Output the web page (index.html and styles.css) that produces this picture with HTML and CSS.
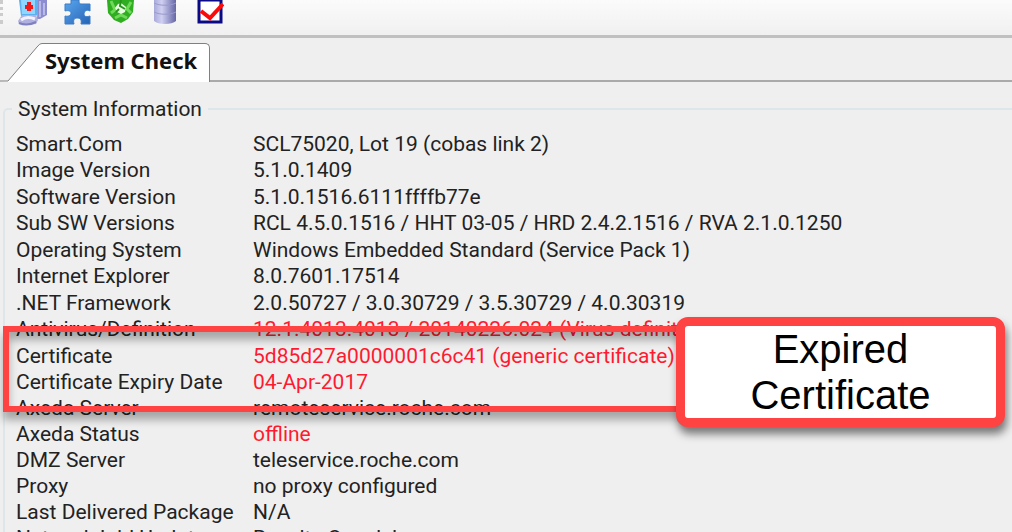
FILE: index.html
```html
<!DOCTYPE html>
<html lang="en">
  <head>
    <meta charset="utf-8">
    <title>System Check</title>
    <link rel="stylesheet" href="styles.css">
  </head>
  <body>
    <div class="toolbar">
      <span class="grip"></span>
      <button class="tool" aria-label="Computer">
        <svg viewBox="0 0 30 26" width="30" height="26">
          <path d="M20 0h9v15l-7 4h-3z" fill="#8c8cd0"/>
          <path d="M22 1v16M26 3v12" stroke="#b9b9e8" stroke-width="2"/>
          <path d="M1 0h19v14l-2 2H3z" fill="#5eb0ee"/>
          <path d="M3 0h14v14H4z" fill="#8fd6ff"/>
          <path d="M4 15h14l2 5-2 4-8 1-9-1-1-3z" fill="#b0b0e0"/>
          <path d="M3 20c4-3 9-3 14-1" stroke="#f0f0ff" stroke-width="3" fill="none"/>
          <path d="M1 23c5 2 11 2 17-1" stroke="#8080be" stroke-width="2" fill="none"/>
          <path d="M11 2v9M7 7h8" stroke="#f21818" stroke-width="4"/>
        </svg>
      </button>
      <button class="tool" aria-label="Plugins">
        <svg viewBox="0 0 30 26" width="30" height="26">
          <defs>
            <linearGradient id="blue" x1="0" y1="0" x2="1" y2="1">
              <stop offset="0" stop-color="#5ba7ef"/>
              <stop offset="1" stop-color="#2563b5"/>
            </linearGradient>
          </defs>
          <path d="M9 0h8c0 3 0 4 2 4h9v7c-3-2-6 0-6 3s3 3 6 2v8h-9c1-5-1-6-4-6s-4 2-3 6H3v-8c4 1 6-1 6-3s-3-3-6-2V4h6z" fill="url(#blue)" stroke="#3a7cc8"/>
        </svg>
      </button>
      <button class="tool" aria-label="Refresh">
        <svg viewBox="0 0 30 26" width="30" height="26">
          <path d="M1 0h27l-1 12-5 7-7 4-7-3-6-7z" fill="#2fae22"/>
          <path d="M5 1l4 9-4 3M25 2l-4 7 4 4M9 18l6-3 6 3" stroke="#6fd958" stroke-width="3" fill="none"/>
          <path d="M15 3l5 4-1 5-4 2-4-2-2-4 3-4z" fill="#e8ffe0"/>
          <path d="M15 0l-1 6 5 3M10 12l3-3" stroke="#27951d" stroke-width="2" fill="none"/>
        </svg>
      </button>
      <button class="tool" aria-label="Database">
        <svg viewBox="0 0 30 26" width="30" height="26">
          <defs>
            <linearGradient id="drum">
              <stop offset="0" stop-color="#a9a9da"/>
              <stop offset="0.350" stop-color="#d0d0f2"/>
              <stop offset="1" stop-color="#6666a6"/>
            </linearGradient>
          </defs>
          <path d="M4 0h22v21c-4 4-18 4-22 0z" fill="url(#drum)"/>
          <path d="M4 3c6 3 16 3 22 0M4 12c6 3 16 3 22 0" stroke="#9a9acc" fill="none"/>
        </svg>
      </button>
      <button class="tool" aria-label="Check">
        <svg viewBox="0 0 30 26" width="30" height="26">
          <path d="M5 0h22v22H5z" fill="#fff" stroke="#0a0a86" stroke-width="3"/>
          <path d="M7 11l9 7L29 4" fill="none" stroke="#fb0a0a" stroke-width="4"/>
        </svg>
      </button>
    </div>

    <div class="tabs">
      <svg class="slope" viewBox="0 0 42 39" width="42" height="39">
        <path d="M0 39L8 38 37 4q3-4 5-3.500V39z" fill="#fff"/>
        <path d="M0 38H8L37 4q3-4 5-3.500" fill="none" stroke="#808080"/>
      </svg>
      <a class="tab" href="#info">System Check</a>
      <span class="tab-line"></span>
    </div>

    <div class="page">
      <fieldset class="info" id="info">
        <legend>System Information</legend>
        <table>
          <tr><th>Smart.Com</th><td>SCL75020, Lot 19 (cobas link 2)</td></tr>
          <tr><th>Image Version</th><td>5.1.0.1409</td></tr>
          <tr><th>Software Version</th><td>5.1.0.1516.6111ffffb77e</td></tr>
          <tr><th>Sub SW Versions</th><td>RCL 4.5.0.1516 / HHT 03-05 / HRD 2.4.2.1516 / RVA 2.1.0.1250</td></tr>
          <tr><th>Operating System</th><td>Windows Embedded Standard (Service Pack 1)</td></tr>
          <tr><th>Internet Explorer</th><td>8.0.7601.17514</td></tr>
          <tr><th>.NET Framework</th><td>2.0.50727 / 3.0.30729 / 3.5.30729 / 4.0.30319</td></tr>
          <tr><th>Antivirus/Definition</th><td class="bad">12.1.4013.4013 / 20140226.024 (Virus definition)</td></tr>
          <tr><th>Certificate</th><td class="bad">5d85d27a0000001c6c41 (generic certificate)</td></tr>
          <tr><th>Certificate Expiry Date</th><td class="bad">04-Apr-2017</td></tr>
          <tr><th>Axeda Server</th><td>remoteservice.roche.com</td></tr>
          <tr><th>Axeda Status</th><td class="bad">offline</td></tr>
          <tr><th>DMZ Server</th><td>teleservice.roche.com</td></tr>
          <tr><th>Proxy</th><td>no proxy configured</td></tr>
          <tr><th>Last Delivered Package</th><td>N/A</td></tr>
          <tr><th>Network Inid Update</th><td>Results Cen del</td></tr>
        </table>
      </fieldset>
      <div class="marker"></div>
      <div class="callout">Expired<br>Certificate</div>
    </div>
  </body>
</html>
```
FILE: styles.css
```css
body {
  margin: 0;
  height: 100vh;
  overflow: hidden;
  background: #efefef;
  color: #222;
  font-family: Roboto, "Liberation Sans", Arial, sans-serif;
  font-size: 21px;
}

.toolbar {
  display: flex;
  gap: 14px;
  height: 35px;
  background: linear-gradient(#fbfbfb, #f0f0f0);
  border-bottom: 3px solid #c0c0c0;
}
.grip {
  width: 1px;
  height: 24px;
  border-left: 3px dotted #ccc;
}
.tool {
  width: 30px;
  height: 26px;
  padding: 0;
  border: 0;
  background: none;
}
.tool svg {
  display: block;
}

.tabs {
  display: flex;
  margin-top: 5px;
}
.slope {
  display: block;
}
.tab {
  box-sizing: border-box;
  height: 39px;
  padding: 0 12px 0 3px;
  background: #fff;
  border: 1px solid #808080;
  border-width: 1px 1px 0 0;
  border-top-right-radius: 5px;
  color: #111;
  font: bold 22px/33px "Noto Sans", sans-serif;
  text-decoration: none;
}
.tab-line {
  flex: 1;
  margin-top: 37px;
  border-top: 2px solid #aaa;
}

.page {
  position: relative;
  padding-top: 14px;
}
.info {
  margin: 0 -9px 0 3px;
  padding: 8px 0 0 11px;
  border: 2px solid #dfe6ea;
  border-radius: 5px;
}
.info legend {
  margin-left: -4px;
  padding: 0 6px;
  line-height: 26px;
}
.info table {
  border-collapse: collapse;
  white-space: nowrap;
}
.info tr {
  height: 26px;
  line-height: 26px;
}
.info tr:nth-child(-2n + 9) {
  height: 27px;
}
.info th,
.info td {
  padding: 0;
  font-weight: normal;
  text-align: left;
}
.info th {
  width: 237px;
}
.info .bad {
  color: #ff1a30;
}

/* annotations on top of the list */
.marker {
  position: absolute;
  top: 244px;
  left: 3px;
  right: 320px;
  height: 74px;
  border: 6px solid #ff4343;
  box-shadow: 0 8px 8px rgba(0, 0, 0, 0.3), inset 0 8px 8px rgba(0, 0, 0, 0.3);
}
.callout {
  position: absolute;
  top: 235px;
  left: 676px;
  right: 7px;
  border: 9px solid #ff4343;
  border-radius: 12px;
  background: #fff;
  box-shadow: 2px 7px 8px rgba(0, 0, 0, 0.5);
  color: #000;
  font: 40px/46px "Liberation Sans", Arial, sans-serif;
  text-align: center;
}
```
